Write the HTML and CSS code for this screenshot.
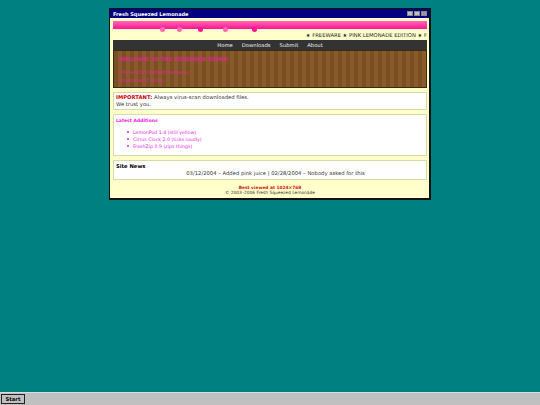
FILE: index.html
```html
<!DOCTYPE html>
<html lang="en">
 <head>
  <meta charset="UTF-8" />
  <title>Fresh Squeezed Lemonade</title>
  <link rel="stylesheet" href="styles.css">
 </head>
 <body>
  <div class="desktop">
   <div class="window">
    <div class="titlebar">
     <span class="title">Fresh Squeezed Lemonade</span>
     <div class="win-buttons">
      <span class="win-btn"></span>
      <span class="win-btn"></span>
      <span class="win-btn close"></span>
     </div>
    </div>
    <div class="content">
     <div class="drip-bar">
      <span class="drip light d1"></span>
      <span class="drip light d2"></span>
      <span class="drip d3"></span>
      <span class="drip light d4"></span>
      <span class="drip d5"></span>
     </div>
     <div class="ticker">★ FREEWARE ★ PINK LEMONADE EDITION ★ F</div>
     <div class="nav">
      <a>Home</a>
      <a>Downloads</a>
      <a>Submit</a>
      <a>About</a>
     </div>
     <div class="hero">
      <h1>WELCOME TO THE LEMONADE STAND</h1>
      <p>The world's tartest freeware.<br>Download it quick.</p>
     </div>
     <div class="box notice">
      <b class="red">IMPORTANT:</b> Always virus-scan downloaded files.<br>We trust you.
     </div>
     <div class="box additions">
      <h2>Latest Additions</h2>
      <ul>
       <li>LemonPod 1.4 (still yellow)</li>
       <li>Citrus Clock 2.0 (ticks loudly)</li>
       <li>FreshZip 0.9 (zips things)</li>
      </ul>
     </div>
     <div class="box news">
      <h3>Site News</h3>
      <div class="news-line">03/12/2004 – Added pink juice | 02/28/2004 – Nobody asked for this</div>
     </div>
     <div class="footer">
      <b>Best viewed at 1024×768</b><br>
      <span>© 2003–2006 Fresh Squeezed Lemonade</span>
     </div>
    </div>
   </div>
  </div>
  <div class="taskbar">
   <button class="start">Start</button>
  </div>
 </body>
</html>
```

FILE: styles.css
```css
html, body {
 height: 100%;
}

body {
 margin: 0;
 display: flex;
 flex-direction: column;
 background-color: #008080;
 font-family: "DejaVu Sans", Verdana, sans-serif;
 font-size: 5.25px;
 color: #333;
 overflow: hidden;
}

.desktop {
 flex: 1;
 padding: 8px 0 0 109px;
}

.window {
 width: 319px;
 border: 1px solid #111;
 border-right-width: 2px;
 border-bottom-width: 2px;
 background: #ffffcc;
}

.titlebar {
 height: 9px;
 background: #000080;
 color: #fff;
 display: flex;
 align-items: center;
 justify-content: space-between;
 padding: 0 2px 0 3px;
}

.title {
 font-weight: bold;
 font-size: 5px;
}

.win-buttons {
 display: flex;
 gap: 1px;
}

.win-btn {
 width: 6px;
 height: 5px;
 background: #c0c0c0;
 border: 1px solid #888;
 box-sizing: border-box;
}

.win-btn.close {
 background: #999;
}

.content {
 padding: 3px 2px 3px 3px;
}

.drip-bar {
 position: relative;
 height: 8px;
 background: linear-gradient(#ff69b4, #ff1493);
}

.drip {
 position: absolute;
 top: 6px;
 width: 5px;
 height: 5px;
 border-radius: 50%;
 background: #ff1493;
}

.drip.light {
 background: #ff69b4;
}

.d1 { left: 47px; }
.d2 { left: 64px; }
.d3 { left: 85px; }
.d4 { left: 110px; }
.d5 { left: 139px; }

.ticker {
 margin: 2px 0 1px;
 height: 8px;
 line-height: 8px;
 text-align: right;
 white-space: nowrap;
 overflow: hidden;
 color: #222;
}

.nav {
 height: 10px;
 background: #333;
 display: flex;
 justify-content: center;
 align-items: center;
 gap: 9px;
 color: #eee;
}

.hero {
 height: 38px;
 box-sizing: border-box;
 border: 1px solid #3a2a10;
 padding: 5px 5px;
 background: repeating-linear-gradient(90deg, #7a4f24 0, #7a4f24 4px, #8b5a2b 4px, #8b5a2b 8px);
 color: #e0209a;
}

.hero h1 {
 margin: 0 0 5px;
 font-size: 5.2px;
 line-height: 7px;
 font-weight: bold;
}

.hero p {
 margin: 0;
 font-size: 4.9px;
 line-height: 8px;
}

.box {
 margin-top: 4px;
 background: #fff;
 border: 1px solid #d8d8a8;
 padding: 1px 2px;
 line-height: 7px;
}

.red {
 color: #cc0000;
}

.additions {
 height: 42px;
 box-sizing: border-box;
 color: #ee22dd;
}

.additions h2 {
 margin: 1px 0 0;
 font-size: 4.5px;
 line-height: 7px;
}

.additions ul {
 margin: 5px 0 0;
 padding-left: 11px;
 font-size: 4.7px;
 list-style: none;
}

.additions li::before {
 content: "";
 display: inline-block;
 width: 2px;
 height: 2px;
 border-radius: 50%;
 margin-right: 4px;
 vertical-align: 1px;
 background: #ee22dd;
}

.news {
 padding: 2px;
}

.news h3 {
 margin: 0;
 font-size: 5.25px;
 color: #000;
}

.news-line {
 text-align: center;
 padding-left: 11px;
}

.footer {
 margin-top: 5px;
 text-align: center;
 font-size: 4.35px;
 line-height: 5px;
}

.footer b {
 color: #dd1111;
}

.taskbar {
 height: 13px;
 background: #c0c0c0;
 border-top: 1px solid #ddd;
 box-sizing: border-box;
 padding: 1px;
 display: flex;
 align-items: center;
}

.start {
 height: 10px;
 width: 24px;
 padding: 0;
 font: bold 5.25px "DejaVu Sans", sans-serif;
 background: #c0c0c0;
 border: 1px solid #222;
 color: #000;
}
```
